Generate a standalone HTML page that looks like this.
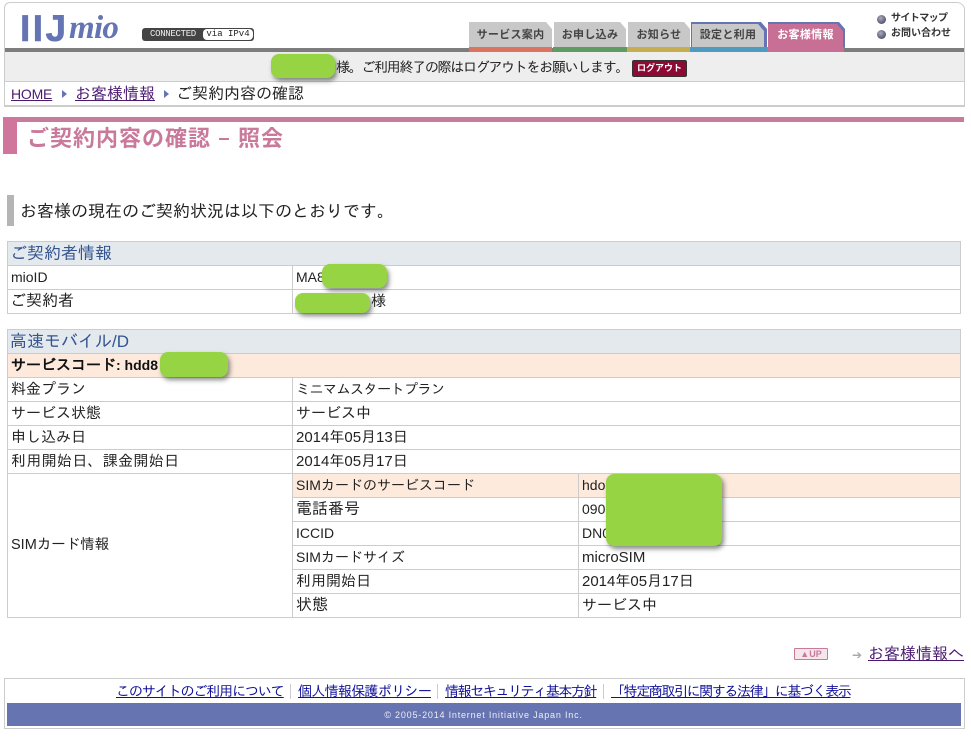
<!DOCTYPE html>
<html lang="ja"><head><meta charset="utf-8"><title>ご契約内容の確認</title>
<style>
html,body{margin:0;padding:0;background:#fff}
body{width:971px;height:742px;position:relative;overflow:hidden;font-family:"Liberation Sans","IPAGothic","Noto Sans CJK JP",sans-serif;font-size:14px;color:#222}
.a{position:absolute;white-space:nowrap}
.b{position:absolute;box-sizing:border-box}
.g{position:absolute;background:#96d443;border-radius:8px;box-shadow:2px 3px 5px rgba(40,50,40,.55)}
.tab{position:absolute;top:22px;height:26px;background:#c8c8c8;font:bold 11px/27px "Liberation Sans","Noto Sans CJK JP",sans-serif;color:#444;text-align:center;clip-path:polygon(0 0,calc(100% - 6px) 0,100% 7px,100% 100%,0 100%);letter-spacing:.3px}
.cell{position:absolute;box-sizing:border-box;border:1px solid #ccc;height:25px;line-height:23px;padding-left:3px;background:#fff;white-space:nowrap}
.k{font-size:16px}
.m{font-size:15px}
.h{font-size:17px;color:#33548f;background:#e4e9ed;padding-left:2px}
a{color:#4a1a70}
.ft{color:#10109a}
</style></head><body>
<!-- header frame -->
<div class="b" style="left:4px;top:2px;width:961px;height:105px;border:1px solid #ccc;border-bottom:2px solid #ccc;border-radius:6px 8px 0 0"></div>
<div class="a" style="left:20px;top:8px;font:bold 37px/42px 'Liberation Sans',sans-serif;color:#6574b3;letter-spacing:2.5px;-webkit-text-stroke:.6px #6574b3">IIJ</div>
<div class="a" style="left:69px;top:11px;font:italic bold 33px/34px 'Liberation Serif',serif;color:#6574b3;letter-spacing:-.7px">mio</div>
<div class="b" style="left:142px;top:28px;width:112px;height:13px;background:#444;border-radius:3px"></div>
<div class="a" style="left:150px;top:28px;font:9px/13px 'Liberation Mono',monospace;color:#eee;letter-spacing:-.3px">CONNECTED</div>
<div class="b" style="left:203px;top:29px;width:50px;height:11px;background:#fff;border-radius:4px;font:9px/11px 'Liberation Mono',monospace;color:#222;text-align:center">via IPv4</div>
<!-- header bar -->
<div class="b" style="left:5px;top:48px;width:959px;height:4px;background:#7d7d7d"></div>
<div class="b" style="left:5px;top:52px;width:959px;height:30px;background:#eee;border-bottom:1px solid #ccc"></div>
<!-- tabs -->
<div class="tab" style="left:469px;width:83px">サービス案内</div>
<div class="tab" style="left:554px;width:72px">お申し込み</div>
<div class="tab" style="left:628px;width:62px">お知らせ</div>
<div class="tab" style="left:691px;width:76px;background:#6574b3"></div>
<div class="tab" style="left:692px;top:24px;width:72px;height:24px;line-height:23px">設定と利用</div>
<div class="tab" style="left:768px;width:77px;background:#6574b3"></div>
<div class="tab" style="left:768px;top:24px;width:75px;height:24px;line-height:23px;background:#c76f94;color:#fff">お客様情報</div>
<div class="b" style="left:469px;top:47px;width:83px;height:5px;background:#d9755f"></div>
<div class="b" style="left:553px;top:47px;width:74px;height:5px;background:#5f9b62"></div>
<div class="b" style="left:627px;top:47px;width:63px;height:5px;background:#c5ad50"></div>
<div class="b" style="left:690px;top:47px;width:77px;height:5px;background:#4e9ac0"></div>
<div class="b" style="left:767px;top:47px;width:77px;height:5px;background:#c76f94"></div>
<!-- utility links -->
<div class="b" style="left:877px;top:15px;width:9px;height:9px;border-radius:50%;background:radial-gradient(circle at 40% 35%,#aab,#335)"></div>
<div class="b" style="left:877px;top:30px;width:9px;height:9px;border-radius:50%;background:radial-gradient(circle at 40% 35%,#aab,#335)"></div>
<div class="a" style="left:891px;top:12px;font:bold 10px/14px 'Liberation Sans','Noto Sans CJK JP',sans-serif;color:#333;letter-spacing:-.6px">サイトマップ</div>
<div class="a" style="left:891px;top:27px;font:bold 10px/14px 'Liberation Sans','Noto Sans CJK JP',sans-serif;color:#333">お問い合わせ</div>
<!-- logout row -->
<div class="a" style="left:336px;top:58px;font-size:14px;line-height:18px;letter-spacing:-1.3px">様。ご利用終了の際はログアウトをお願いします。</div>
<div class="b" style="left:632px;top:60px;width:55px;height:17px;background:#8c0a33;border:1px solid #333;border-radius:2px;font:bold 9px/15px 'Liberation Sans','Noto Sans CJK JP',sans-serif;color:#fff;text-align:center">ログアウト</div>
<div class="g" style="left:271px;top:54px;width:64px;height:24px"></div>
<!-- breadcrumb -->
<div class="a" style="left:11px;top:85px;font-size:14px;line-height:19px;letter-spacing:-.2px"><a href="#">HOME</a></div>
<div class="b" style="left:62px;top:90px;border-left:5px solid #6574b3;border-top:4px solid transparent;border-bottom:4px solid transparent;width:0;height:0"></div>
<div class="a" style="left:75px;top:85px;font-size:16px;line-height:19px"><a href="#">お客様情報</a></div>
<div class="b" style="left:164px;top:90px;border-left:5px solid #6574b3;border-top:4px solid transparent;border-bottom:4px solid transparent;width:0;height:0"></div>
<div class="a" style="left:176px;top:85px;font-size:16px;line-height:19px">ご契約内容の確認</div>
<!-- page title -->
<div class="b" style="left:3px;top:117px;width:961px;height:5px;background:#c67c9a"></div>
<div class="b" style="left:3px;top:117px;width:14px;height:37px;background:#d0759b"></div>
<div class="a" style="left:27px;top:125px;font:bold 22px/28px 'Liberation Sans','Noto Sans CJK JP',sans-serif;color:#c9799a;letter-spacing:1px">ご契約内容の確認</div>
<div class="b" style="left:219px;top:138px;width:10px;height:2px;background:#c9799a"></div>
<div class="a" style="left:238px;top:125px;font:bold 22px/28px 'Liberation Sans','Noto Sans CJK JP',sans-serif;color:#c9799a;letter-spacing:1px">照会</div>
<!-- lead -->
<div class="b" style="left:7px;top:195px;width:7px;height:31px;background:#b5b5b5"></div>
<div class="a" style="left:20px;top:201px;font-size:17px;line-height:22px">お客様の現在のご契約状況は以下のとおりです。</div>
<!-- table 1 -->
<div class="cell h" style="left:7px;top:241px;width:954px">ご契約者情報</div>
<div class="cell" style="left:7px;top:265px;width:286px">mioID</div>
<div class="cell" style="left:292px;top:265px;width:669px">MA8</div>
<div class="cell k" style="left:7px;top:289px;width:286px;padding-left:2px">ご契約者</div>
<div class="cell m" style="left:292px;top:289px;width:669px"><span style="margin-left:75px">様</span></div>
<div class="g" style="left:322px;top:264px;width:65px;height:24px"></div>
<div class="g" style="left:295px;top:293px;width:75px;height:20px"></div>
<!-- table 2 -->
<div class="cell h" style="left:7px;top:329px;width:954px">高速モバイル/D</div>
<div class="cell" style="left:7px;top:353px;width:954px;background:#fdeadc;color:#111;font-weight:bold;font-size:15px"><span>サービスコード</span><span style="font-size:14px">: hdd8</span></div>
<div class="cell m" style="left:7px;top:377px;width:286px">料金プラン</div>
<div class="cell" style="left:292px;top:377px;width:669px;letter-spacing:-.5px">ミニマムスタートプラン</div>
<div class="cell m" style="left:7px;top:401px;width:286px">サービス状態</div>
<div class="cell m" style="left:292px;top:401px;width:669px">サービス中</div>
<div class="cell m" style="left:7px;top:425px;width:286px">申し込み日</div>
<div class="cell m" style="left:292px;top:425px;width:669px">2014年05月13日</div>
<div class="cell m" style="left:7px;top:449px;width:286px;letter-spacing:.3px">利用開始日、課金開始日</div>
<div class="cell m" style="left:292px;top:449px;width:669px">2014年05月17日</div>
<div class="cell" style="left:7px;top:473px;width:286px;height:145px;line-height:143px;font-size:14.5px">SIMカード情報</div>
<div class="cell" style="left:292px;top:473px;width:287px;background:#fdeadc">SIMカードのサービスコード</div>
<div class="cell" style="left:578px;top:473px;width:383px;background:#fdeadc">hdo</div>
<div class="cell k" style="left:292px;top:497px;width:287px">電話番号</div>
<div class="cell" style="left:578px;top:497px;width:383px">090</div>
<div class="cell" style="left:292px;top:521px;width:287px">ICCID</div>
<div class="cell" style="left:578px;top:521px;width:383px">DN0</div>
<div class="cell" style="left:292px;top:545px;width:287px">SIMカードサイズ</div>
<div class="cell m" style="left:578px;top:545px;width:383px">microSIM</div>
<div class="cell m" style="left:292px;top:569px;width:287px">利用開始日</div>
<div class="cell m" style="left:578px;top:569px;width:383px">2014年05月17日</div>
<div class="cell k" style="left:292px;top:593px;width:287px">状態</div>
<div class="cell m" style="left:578px;top:593px;width:383px">サービス中</div>
<div class="g" style="left:160px;top:352px;width:68px;height:25px"></div>
<div class="g" style="left:606px;top:474px;width:116px;height:72px"></div>
<!-- bottom links -->
<div class="b" style="left:794px;top:648px;width:34px;height:12px;border:1px solid #c9799a;background:#f5e6ec;border-radius:1px;font:bold 9px/10px 'Liberation Sans',sans-serif;color:#c9799a;text-align:center">▲UP</div>
<div class="a" style="left:852px;top:647px;font-size:12px;line-height:16px;color:#aaa">➔</div>
<div class="a" style="left:868px;top:645px;font-size:16px;line-height:19px"><a href="#">お客様情報へ</a></div>
<!-- footer -->
<div class="b" style="left:4px;top:678px;width:961px;height:51px;border:1px solid #ccc"></div>
<div class="a" style="left:116px;top:683px;font-size:14px;line-height:17px;letter-spacing:-1.1px"><a class="ft" href="#">このサイトのご利用について</a></div>
<div class="a" style="left:298px;top:683px;font-size:14px;line-height:17px;letter-spacing:-.7px"><a class="ft" href="#">個人情報保護ポリシー</a></div>
<div class="a" style="left:445px;top:683px;font-size:14px;line-height:17px;letter-spacing:-1.4px"><a class="ft" href="#">情報セキュリティ基本方針</a></div>
<div class="a" style="left:611px;top:683px;font-size:14px;line-height:17px;letter-spacing:-1.4px"><a class="ft" href="#">「特定商取引に関する法律」に基づく表示</a></div>
<div class="b" style="left:290px;top:684px;width:1px;height:15px;background:#ccc"></div>
<div class="b" style="left:437px;top:684px;width:1px;height:15px;background:#ccc"></div>
<div class="b" style="left:603px;top:684px;width:1px;height:15px;background:#ccc"></div>
<div class="b" style="left:7px;top:703px;width:954px;height:23px;background:#6774b2"></div>
<div class="a" style="left:0;top:708px;width:967px;text-align:center;font-size:9px;line-height:14px;color:#eee;letter-spacing:.8px">© 2005-2014 Internet Initiative Japan Inc.</div>
</body></html>
